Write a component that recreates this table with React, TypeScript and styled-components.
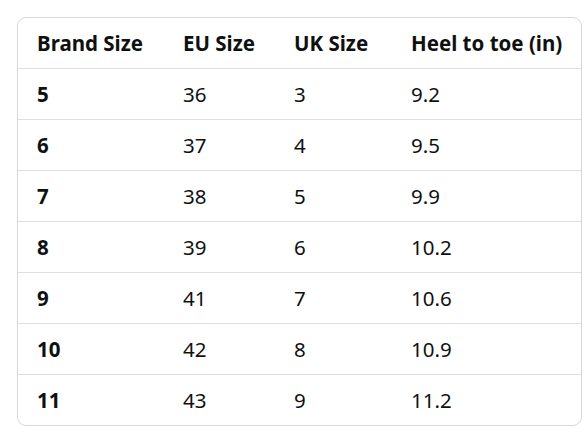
import React from "react";
import styled, { createGlobalStyle } from "styled-components";

const GlobalStyle = createGlobalStyle`
  html, body {
    margin: 0;
    padding: 0;
    background: #ffffff;
  }
  body {
    font-family: "Noto Sans", "Open Sans", Arial, sans-serif;
    color: #0f1111;
  }
`;

const Page = styled.div`
  padding: 17px 6px 16px 17px;
`;

const Card = styled.div`
  width: 563px;
  border: 1px solid #d5d9d9;
  border-radius: 9px;
  overflow: hidden;
`;

const Table = styled.table`
  width: 100%;
  border-collapse: collapse;
  table-layout: fixed;
  font-size: 20.5px;
`;

const Row = styled.tr<{ $divided?: boolean }>`
  height: ${(p) => (p.$divided ? "51px" : "50px")};
  border-top: ${(p) => (p.$divided ? "1px solid #dcdfdf" : "none")};
`;

const HeadCell = styled.th<{ $w?: number }>`
  box-sizing: border-box;
  width: ${(p) => (p.$w ? `${p.$w}px` : "auto")};
  text-align: left;
  font-weight: 700;
  padding: 0 0 0 19px;
  white-space: nowrap;
`;

const Cell = styled.td<{ $bold?: boolean }>`
  padding: 0 0 0 19px;
  font-weight: ${(p) => (p.$bold ? 700 : 400)};
  white-space: nowrap;
`;

const sizes = [
  ["5", "36", "3", "9.2"],
  ["6", "37", "4", "9.5"],
  ["7", "38", "5", "9.9"],
  ["8", "39", "6", "10.2"],
  ["9", "41", "7", "10.6"],
  ["10", "42", "8", "10.9"],
  ["11", "43", "9", "11.2"],
];

const App: React.FC = () => (
  <>
    <GlobalStyle />
    <Page>
      <Card>
        <Table>
          <thead>
            <Row>
              <HeadCell $w={146}>Brand Size</HeadCell>
              <HeadCell $w={111}>EU Size</HeadCell>
              <HeadCell $w={117}>UK Size</HeadCell>
              <HeadCell>Heel to toe (in)</HeadCell>
            </Row>
          </thead>
          <tbody>
            {sizes.map((r) => (
              <Row key={r[0]} $divided>
                <Cell $bold>{r[0]}</Cell>
                <Cell>{r[1]}</Cell>
                <Cell>{r[2]}</Cell>
                <Cell>{r[3]}</Cell>
              </Row>
            ))}
          </tbody>
        </Table>
      </Card>
    </Page>
  </>
);

export default App;
